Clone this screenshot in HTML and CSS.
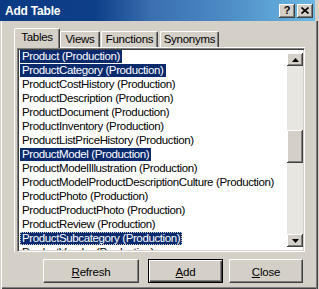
FILE: index.html
```html
<!DOCTYPE html>
<html>
<head>
<meta charset="utf-8">
<link rel="stylesheet" href="styles.css">
</head>
<body>
<div class="win">
  <div class="titlebar">
    <span class="title">Add Table</span>
    <div class="tbtns">
      <span class="tbtn q">?</span>
      <span class="tbtn"><svg width="8" height="7" viewBox="0 0 8 7"><path d="M0.5 0.5L7.5 6.5M7.5 0.5L0.5 6.5" stroke="#000" stroke-width="1.6" fill="none"/></svg></span>
    </div>
  </div>
  <div class="client">
    <div class="tabs">
      <div class="tab active t-tables">Tables</div>
      <div class="tab t-views">Views</div>
      <div class="tab t-functions">Functions</div>
      <div class="tab t-synonyms">Synonyms</div>
    </div>
    <div class="panel">
      <div class="list">
        <div class="items">
          <div class="item"><span class="sel">Product (Production)</span></div>
          <div class="item"><span class="sel">ProductCategory (Production)</span></div>
          <div class="item"><span>ProductCostHistory (Production)</span></div>
          <div class="item"><span>ProductDescription (Production)</span></div>
          <div class="item"><span>ProductDocument (Production)</span></div>
          <div class="item"><span>ProductInventory (Production)</span></div>
          <div class="item"><span>ProductListPriceHistory (Production)</span></div>
          <div class="item"><span class="sel">ProductModel (Production)</span></div>
          <div class="item"><span>ProductModelIllustration (Production)</span></div>
          <div class="item"><span>ProductModelProductDescriptionCulture (Production)</span></div>
          <div class="item"><span>ProductPhoto (Production)</span></div>
          <div class="item"><span>ProductProductPhoto (Production)</span></div>
          <div class="item"><span>ProductReview (Production)</span></div>
          <div class="item"><span class="sel focus">ProductSubcategory (Production)</span></div>
          <div class="item"><span>ProductVendor (Production)</span></div>
        </div>
        <div class="sb">
          <div class="sbbtn"><svg width="7" height="4" viewBox="0 0 7 4"><polygon points="3.5,0 7,4 0,4" fill="#000"/></svg></div>
          <div class="track"><div class="thumb"></div></div>
          <div class="sbbtn"><svg width="7" height="4" viewBox="0 0 7 4"><polygon points="0,0 7,0 3.5,4" fill="#000"/></svg></div>
        </div>
      </div>
    </div>
    <div class="btnrow">
      <div class="btn b-refresh"><span><u>R</u>efresh</span></div>
      <div class="btn b-add default"><span><u>A</u>dd</span></div>
      <div class="btn b-close"><span><u>C</u>lose</span></div>
    </div>
  </div>
</div>
</body>
</html>
```
FILE: styles.css
```css
* { box-sizing: border-box; }
html, body { margin: 0; padding: 0; }
body {
  width: 319px;
  height: 289px;
  overflow: hidden;
  background: #d4d0c8;
  font-family: "Liberation Sans", Arial, sans-serif;
  font-size: 11px;
  color: #000;
}
.win {
  width: 318px;
  height: 289px;
  display: flex;
  flex-direction: column;
}
.titlebar {
  height: 21px;
  width: 315px;
  flex: none;
  background: linear-gradient(90deg, #0b3a84 0%, #0d3f88 30%, #3a6fb0 48%, #4d8cc6 72%, #6cb8e2 100%);
  display: flex;
  align-items: center;
  justify-content: space-between;
  padding: 0 2px 0 5px;
}
.title {
  color: #fff;
  font-weight: bold;
  font-size: 12px;
  letter-spacing: -0.2px;
}
.tbtns { display: flex; gap: 2px; }
.tbtn {
  width: 16px;
  height: 14px;
  background: #d4d0c8;
  box-shadow: inset -1px -1px #404040, inset 1px 1px #fff, inset -2px -2px #808080;
  display: flex;
  align-items: center;
  justify-content: center;
}
.tbtn.q {
  font-weight: bold;
  font-size: 11px;
  line-height: 14px;
  padding-bottom: 1px;
}
.client {
  flex: 1;
  display: flex;
  flex-direction: column;
  padding-top: 7px;
  box-shadow: inset 1px 0 #d4d0c8, inset 2px 0 #fff, inset -1px 0 #404040, inset -2px 0 #808080, inset 0 -1px #404040, inset 0 -2px #808080;
}
.tabs {
  height: 19px;
  display: flex;
  align-items: flex-end;
  padding-left: 14px;
  position: relative;
  z-index: 1;
}
.tab {
  height: 16px;
  border: 1px solid #fff;
  border-right-color: #404040;
  border-bottom: none;
  border-radius: 2px 2px 0 0;
  box-shadow: inset -1px 0 #808080;
  background: #d4d0c8;
  text-align: center;
  font-size: 11.5px;
  letter-spacing: -0.25px;
  line-height: 13px;
  padding-top: 1px;
  white-space: nowrap;
}
.tab.active {
  height: 20px;
  margin-bottom: -1px;
  padding-top: 2px;
}
.t-tables { width: 46px; }
.t-views { width: 40px; }
.t-functions { width: 57px; margin-left: 1px; }
.t-synonyms { width: 59px; margin-left: 2px; }
.panel {
  margin-left: 14px;
  width: 291px;
  border-top: 1px solid #fff;
  border-left: 1px solid #fff;
  padding-left: 2px;
}
.list {
  width: 288px;
  height: 204px;
  display: flex;
  background: #fff;
  border: 1px solid;
  border-color: #808080 #fff #fff #808080;
  box-shadow: inset 1px 1px #404040, inset -1px -1px #d4d0c8;
  padding: 1px;
}
.items {
  flex: 1;
  overflow: hidden;
  padding-left: 1px;
}
.item { height: 14px; }
.item span {
  display: inline-block;
  height: 13px;
  line-height: 13px;
  padding: 0 2px;
  white-space: nowrap;
  font-size: 11.5px;
  letter-spacing: -0.38px;
}
.item .sel {
  background: #0a2a6e;
  color: #fff;
}
.item .focus {
  outline: 1px dotted #c8c8c8;
  outline-offset: -1px;
}
.sb {
  width: 16px;
  margin: 3px 0;
  display: flex;
  flex-direction: column;
  background: #e8e6e1;
}
.sbbtn {
  height: 13px;
  flex: none;
  background: #d4d0c8;
  box-shadow: inset -1px -1px #404040, inset 1px 1px #fff, inset -2px -2px #808080;
  display: flex;
  align-items: center;
  justify-content: center;
}
.track { flex: 1; }
.thumb {
  margin-top: 64px;
  height: 33px;
  background: #d4d0c8;
  box-shadow: inset -1px -1px #404040, inset 1px 1px #fff, inset -2px -2px #808080;
}
.btnrow {
  display: flex;
  margin-top: 7px;
  padding-left: 43px;
}
.btn {
  height: 24px;
  background: #d4d0c8;
  border: 1px solid;
  border-color: #fff #404040 #404040 #fff;
  box-shadow: inset -1px -1px #808080;
  display: flex;
  align-items: center;
  justify-content: center;
  font-size: 11.5px;
  letter-spacing: -0.2px;
}
.btn span { padding-top: 1px; }
.b-refresh { width: 96px; }
.b-add { width: 75px; margin-left: 9px; }
.b-close { width: 74px; margin-left: 6px; }
.btn.default {
  border: 1px solid #000;
  box-shadow: inset 1px 1px #fff, inset -1px -1px #404040, inset -2px -2px #808080;
}
```
